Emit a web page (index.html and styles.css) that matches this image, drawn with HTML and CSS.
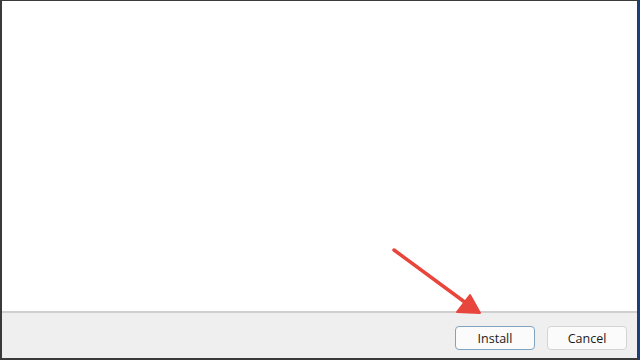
FILE: index.html
```html
<!DOCTYPE html>
<html lang="en">
<head>
    <meta charset="UTF-8">
    <title>Setup</title>
    <link rel="stylesheet" href="styles.css">
</head>
<body>
    <div class="window">
        <div class="pane"></div>
        <div class="footer">
            <button class="btn btn-default">Install</button>
            <button class="btn">Cancel</button>
        </div>
        <!-- annotation arrow -->
        <svg class="arrow" width="640" height="360" viewBox="0 0 640 360">
            <line x1="394" y1="250" x2="466" y2="303" stroke="#e8453c" stroke-width="3.5" stroke-linecap="round"/>
            <polygon points="480,313 457,312 470,295" fill="#e8453c" stroke="#e8453c" stroke-width="2" stroke-linejoin="round"/>
        </svg>
    </div>
</body>
</html>
```

FILE: styles.css
```css
html, body {
    margin: 0;
    height: 100%;
}
body {
    font-family: "Open Sans", "Noto Sans", sans-serif;
    background: #ffffff;
}
.window {
    position: relative;
    box-sizing: border-box;
    height: 360px;
    display: flex;
    flex-direction: column;
    border-top: 1px solid #3a3a3a;
    border-left: 2px solid #3a3a3a;
    border-right: 3px solid #1d3f78;
    border-bottom: 2px solid #3a3a3a;
}
.pane {
    flex: 1;
    background: #ffffff;
}
.footer {
    height: 47px;
    box-sizing: border-box;
    background: #efefef;
    border-top: 2px solid #cfcfcf;
    display: flex;
    justify-content: flex-end;
    align-items: flex-start;
    gap: 12px;
    padding: 13px 10px 0 0;
}
.btn {
    width: 80px;
    height: 24px;
    font-family: inherit;
    font-size: 12.5px;
    color: #1a1a1a;
    background: #fbfbfb;
    border: 1px solid #d4d4d4;
    border-radius: 4px;
    padding: 0;
}
.btn-default {
    border-color: #7fa3c0;
}
.arrow {
    position: absolute;
    top: -1px;
    left: -2px;
    pointer-events: none;
}
```
